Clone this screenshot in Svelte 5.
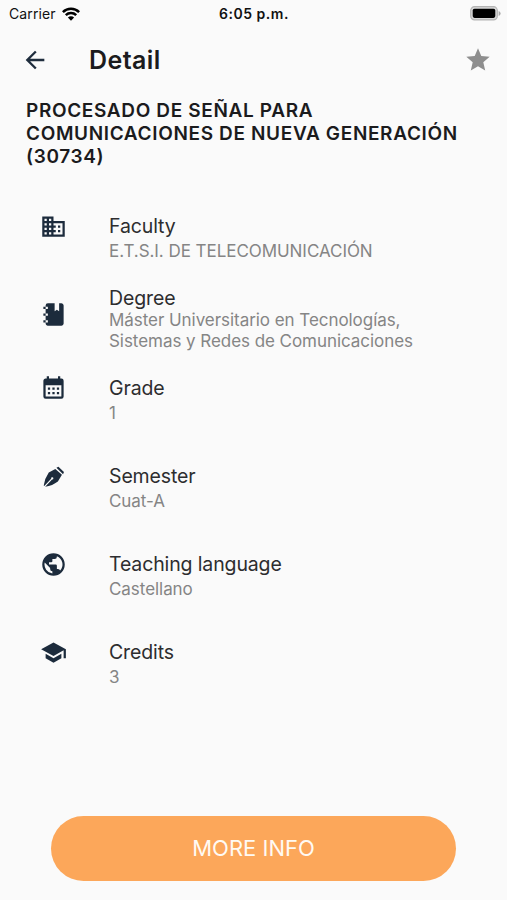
<script>
  const details = [
    { icon: 'business', label: 'Faculty', lines: ['E.T.S.I. DE TELECOMUNICACIÓN'], kind: 'first' },
    { icon: 'book', label: 'Degree', lines: ['Máster Universitario en Tecnologías,', 'Sistemas y Redes de Comunicaciones'], kind: 'tall' },
    { icon: 'calendar', label: 'Grade', lines: ['1'], kind: '' },
    { icon: 'pen', label: 'Semester', lines: ['Cuat-A'], kind: '' },
    { icon: 'globe', label: 'Teaching language', lines: ['Castellano'], kind: '' },
    { icon: 'school', label: 'Credits', lines: ['3'], kind: '' }
  ];
</script>

<main>
  <div class="status">
    <div class="carrier">
      <span>Carrier</span>
      <svg width="18" height="14" viewBox="0 0 18 14">
        <g fill="none" stroke="#000" stroke-width="2.5">
          <path d="M.9 5.1a11.5 11.5 0 0 1 16.2 0" />
          <path d="M3.8 8.2a7.4 7.4 0 0 1 10.4 0" />
        </g>
        <path d="M9 13.7 5.9 10.6a4.4 4.4 0 0 1 6.2 0z" />
      </svg>
    </div>
    <span class="time">6:05 p.m.</span>
    <svg class="battery" width="31" height="15" viewBox="0 0 31 15">
      <rect x=".7" y=".7" width="26.6" height="13.2" rx="3.8" fill="#d8d8d8" stroke="#b4b4b4" stroke-width="1.2" />
      <rect x="2.7" y="2.7" width="22.6" height="9.2" rx="1.8" />
      <path d="M28.6 5v5q2-.7 2-2.5T28.6 5z" fill="#aaa" />
    </svg>
  </div>

  <header>
    <svg class="back" width="28" height="28" viewBox="0 0 24 24" fill="#1f2d3d">
      <path d="M20 11H7.83l5.59-5.59L12 4l-8 8 8 8 1.41-1.41L7.83 13H20z" />
    </svg>
    <h1>Detail</h1>
    <svg class="star" width="28" height="28" viewBox="0 0 24 24" fill="#8e8e8e">
      <path d="M12 17.27 18.18 21l-1.64-7.03L22 9.24l-7.19-.61L12 2 9.19 8.63 2 9.24l5.46 4.73L5.82 21z" />
    </svg>
  </header>

  <h2>
    <span>PROCESADO DE SEÑAL PARA</span>
    <span>COMUNICACIONES DE NUEVA GENERACIÓN</span>
    <span>(30734)</span>
  </h2>

  <section>
    {#each details as item}
      <div class="row {item.kind}">
        <svg class="icon" width="27" height="27" viewBox="0 0 24 24" fill="#1c2b3c">
          {#if item.icon === 'business'}
            <path d="M12 7V3H2v18h20V7H12zM6 19H4v-2h2v2zm0-4H4v-2h2v2zm0-4H4V9h2v2zm0-4H4V5h2v2zm4 12H8v-2h2v2zm0-4H8v-2h2v2zm0-4H8V9h2v2zm0-4H8V5h2v2zm10 12h-8v-2h2v-2h-2v-2h2v-2h-2V9h8v10zm-2-8h-2v2h2v-2zm0 4h-2v2h2v-2z" />
          {:else if item.icon === 'book'}
            <path fill-rule="evenodd" d="M3 7V5h2V4a2 2 0 0 1 2-2h6v7l2-1.2 2 1.2V2h2c1.05 0 2 .95 2 2v16c0 1.05-.95 2-2 2H7c-1.05 0-2-.95-2-2v-1H3v-2h2v-4H3v-2h2V7H3zm2-2v2h2V5H5zm0 14h2v-2H5v2zm0-6h2v-2H5v2z" />
          {:else if item.icon === 'calendar'}
            <path d="M7 11h2v2H7v-2zm14-6v14a2 2 0 0 1-2 2H5a2 2 0 0 1-2-2V5c0-1.1.9-2 2-2h1V1h2v2h8V1h2v2h1a2 2 0 0 1 2 2zM5 19h14V9H5v10zm10-6v-2h2v2h-2zm-4 0v-2h2v2h-2zm-4 2h2v2H7v-2zm8 2v-2h2v2h-2zm-4 0v-2h2v2h-2z" />
          {:else if item.icon === 'pen'}
            <path d="m14.6 4.3 1.8-1 4.9 4.6-.8 2-5.9-5.6z" />
            <path d="M13.6 5.3 7.8 8.5Q4.2 13.7 3.3 20l.5.5 6.1-6.6a1 1 0 1 1 .8.8l-6.1 6.5q6.6-1.2 11.3-4.8l3.6-6z" />
          {:else if item.icon === 'globe'}
            <path d="M12 2a10 10 0 1 0 0 20 10 10 0 0 0 0-20zm-1 17.93A8 8 0 0 1 4.21 10.21L9 15v1a2 2 0 0 0 2 2v1.93zm6.9-2.54A2 2 0 0 0 16 16h-1v-3a1 1 0 0 0-1-1H8v-2h2a1 1 0 0 0 1-1V7h2a2 2 0 0 0 2-2v-.41a8 8 0 0 1 2.9 12.8z" />
          {:else}
            <path d="M5 13.18v4L12 21l7-3.82v-4L12 17l-7-3.82zM12 3 1 9l11 6 9-4.91V17h2V9L12 3z" />
          {/if}
        </svg>
        <div class="copy">
          <div class="label">{item.label}</div>
          <div class="value">
            {#each item.lines as line}<div>{line}</div>{/each}
          </div>
        </div>
      </div>
    {/each}
  </section>

  <button>MORE INFO</button>
</main>

<style>
  :global(body) { margin: 0; background: #fafafa; }
  main {
    box-sizing: border-box;
    height: 900px;
    display: flex;
    flex-direction: column;
    background: #fafafa;
    color: #1b1b1d;
    font-family: Inter, 'Noto Sans', sans-serif;
  }
  svg { display: block; flex: none; }
  .status {
    height: 27px;
    display: grid;
    grid-template-columns: 1fr auto 1fr;
    align-items: center;
    padding: 0 6px 0 9px;
    box-sizing: border-box;
    font-size: 14px;
    color: #111;
  }
  .carrier { display: flex; align-items: center; gap: 6px; letter-spacing: 0.1px; }
  .time { margin-right: 2px; font-weight: 600; letter-spacing: 0.5px; }
  .battery { justify-self: end; }
  header { height: 66px; display: flex; align-items: center; padding: 0 15px 0 21px; }
  h1 { flex: 1; margin: 0 0 0 40px; font-size: 25px; line-height: 30px; font-weight: 600; letter-spacing: 0.4px; }
  h2 {
    margin: 6px 0 0 26px;
    height: 114px;
    display: flex;
    flex-direction: column;
    font-size: 19px;
    line-height: 23px;
    font-weight: 600;
    letter-spacing: 0.65px;
    white-space: nowrap;
  }
  section { flex: 1; }
  .row { display: flex; height: 88px; padding-left: 40px; }
  .row.first { height: 72px; }
  .row.tall { height: 90px; }
  .tall .icon { margin-top: 16px; }
  .copy { margin-left: 42px; white-space: nowrap; }
  .label { font-size: 19.5px; line-height: 26px; letter-spacing: -0.13px; color: #2d2d2f; }
  .value { margin-top: 2px; font-size: 17px; line-height: 21px; letter-spacing: -0.05px; color: #858585; }
  .tall .value { margin-top: -1px; }
  button {
    margin: 0 51px 19px 51px;
    height: 65px;
    padding: 0 0 2px;
    flex: none;
    border: 0;
    border-radius: 33px;
    background: #fca75a;
    color: #fffaf3;
    font: 400 22px/26px Inter, 'Noto Sans', sans-serif;
  }
</style>
